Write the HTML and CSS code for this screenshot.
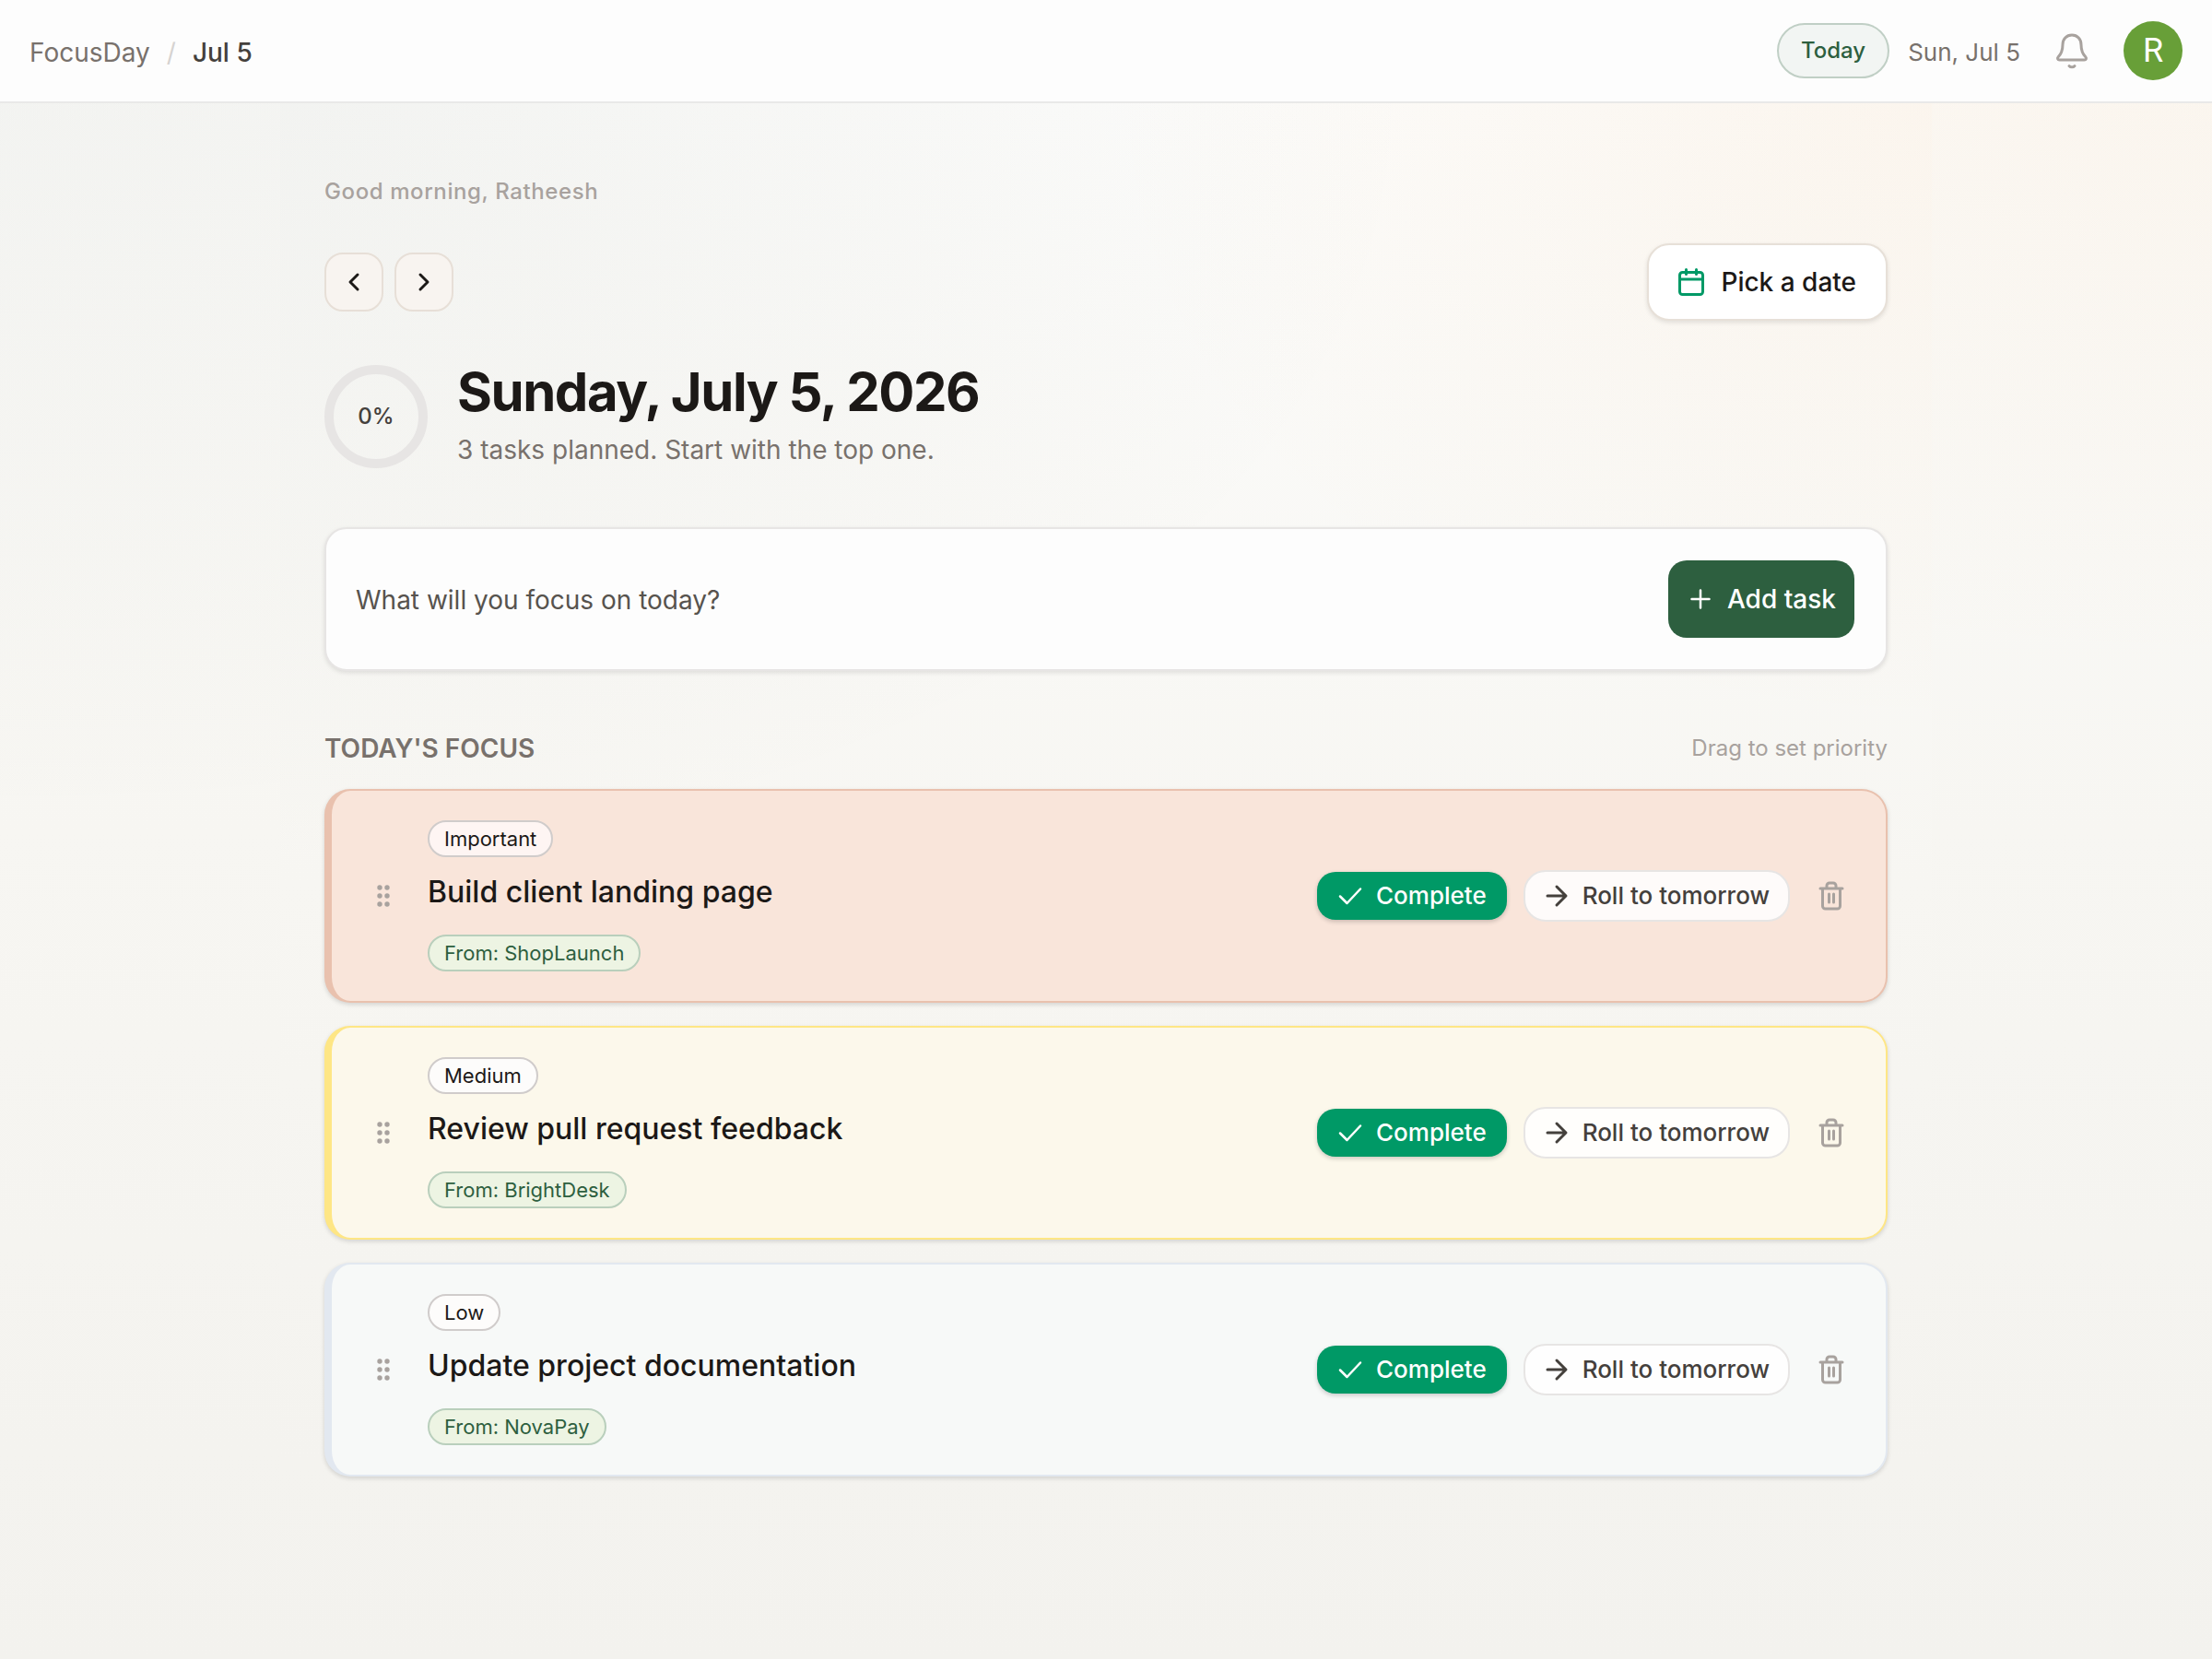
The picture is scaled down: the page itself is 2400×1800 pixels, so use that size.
FILE: index.html
```html
<!DOCTYPE html>
<html lang="en">
<head>
<meta charset="utf-8">
<meta name="viewport" content="width=device-width, initial-scale=1">
<title>FocusDay</title>
<link rel="stylesheet" href="styles.css">
</head>
<body>
<svg class="sprite" aria-hidden="true">
  <symbol id="grip" viewBox="0 0 24 24"><g fill="currentColor"><circle cx="8" cy="3" r="2.700"/><circle cx="16" cy="3" r="2.700"/><circle cx="8" cy="12" r="2.700"/><circle cx="16" cy="12" r="2.700"/><circle cx="8" cy="21" r="2.700"/><circle cx="16" cy="21" r="2.700"/></g></symbol>
  <symbol id="check" viewBox="0 0 28 28"><path d="M3 14.500l7.500 7.500L25 6.500" stroke-width="2.500"/></symbol>
  <symbol id="arrow" viewBox="0 0 28 28"><path d="M4 14h19M14 4l10 10-10 10"/></symbol>
  <symbol id="trash" viewBox="0 0 28 32"><path d="M2 8h24M4.500 8v19a3 3 0 0 0 3 3h13a3 3 0 0 0 3-3V8M9 8V5a3 3 0 0 1 3-3h4a3 3 0 0 1 3 3v3M11.500 14v9M16.500 14v9"/></symbol>
</svg>

<header class="topbar">
  <nav class="crumbs" aria-label="Breadcrumb">
    <a href="#">FocusDay</a><span class="slash">/</span><span class="current">Jul 5</span>
  </nav>
  <div class="tools">
    <button class="today" type="button">Today</button>
    <span class="short-date">Sun, Jul 5</span>
    <button class="bell" type="button" aria-label="Notifications">
      <svg viewBox="0 0 36 40"><path d="M18 3c-6 0-10 4.500-10 10.500 0 7.500-2 10.500-5 13.500-1 1-.5 3 1.500 3h27c2 0 2.500-2 1.500-3-3-3-5-6-5-13.500C28 7.500 24 3 18 3zM15 36.500a4 4 0 0 0 6 0"/></svg>
    </button>
    <button class="avatar" type="button" aria-label="Account">R</button>
  </div>
</header>

<main class="page">
  <p class="greeting">Good morning, Ratheesh</p>

  <div class="date-nav">
    <div class="steps">
      <button class="step" type="button" aria-label="Previous day"><svg viewBox="0 0 24 24"><path d="M16 4l-8 8 8 8"/></svg></button>
      <button class="step" type="button" aria-label="Next day"><svg viewBox="0 0 24 24"><path d="M8 4l8 8-8 8"/></svg></button>
    </div>
    <button class="pick" type="button">
      <svg viewBox="0 0 28 30"><rect x="1.500" y="4.500" width="25" height="24" rx="3"/><path d="M2 12h24M8.500 1.500v5M19.500 1.500v5"/></svg>
      Pick a date
    </button>
  </div>

  <section class="day">
    <div class="ring">0%</div>
    <div>
      <h1>Sunday, July 5, 2026</h1>
      <p class="summary">3 tasks planned. Start with the top one.</p>
    </div>
  </section>

  <form class="composer">
    <input type="text" aria-label="New task" placeholder="What will you focus on today?">
    <button class="add" type="button"><svg viewBox="0 0 22 22"><path d="M11 1.500v19M1.500 11h19" stroke-width="2.500"/></svg>Add task</button>
  </form>

  <div class="list-head">
    <h2>TODAY'S FOCUS</h2>
    <span>Drag to set priority</span>
  </div>

  <ul class="tasks">
    <li class="task important">
      <svg class="grip"><use href="#grip"/></svg>
      <div class="info">
        <span class="badge">Important</span>
        <h3>Build client landing page</h3>
        <span class="badge source">From: ShopLaunch</span>
      </div>
      <div class="actions">
        <button class="complete" type="button"><svg><use href="#check"/></svg>Complete</button>
        <button class="roll" type="button"><svg><use href="#arrow"/></svg>Roll to tomorrow</button>
        <button class="delete" type="button" aria-label="Delete task"><svg><use href="#trash"/></svg></button>
      </div>
    </li>
    <li class="task medium">
      <svg class="grip"><use href="#grip"/></svg>
      <div class="info">
        <span class="badge">Medium</span>
        <h3>Review pull request feedback</h3>
        <span class="badge source">From: BrightDesk</span>
      </div>
      <div class="actions">
        <button class="complete" type="button"><svg><use href="#check"/></svg>Complete</button>
        <button class="roll" type="button"><svg><use href="#arrow"/></svg>Roll to tomorrow</button>
        <button class="delete" type="button" aria-label="Delete task"><svg><use href="#trash"/></svg></button>
      </div>
    </li>
    <li class="task low">
      <svg class="grip"><use href="#grip"/></svg>
      <div class="info">
        <span class="badge">Low</span>
        <h3>Update project documentation</h3>
        <span class="badge source">From: NovaPay</span>
      </div>
      <div class="actions">
        <button class="complete" type="button"><svg><use href="#check"/></svg>Complete</button>
        <button class="roll" type="button"><svg><use href="#arrow"/></svg>Roll to tomorrow</button>
        <button class="delete" type="button" aria-label="Delete task"><svg><use href="#trash"/></svg></button>
      </div>
    </li>
  </ul>
</main>
</body>
</html>
```
FILE: styles.css
```css
:root {
  --wash:
    radial-gradient(ellipse 70% 50% at 0 0, rgba(60, 75, 50, 0.05), transparent),
    radial-gradient(ellipse 50% 40% at 100% 0, rgba(240, 155, 60, 0.07), transparent),
    linear-gradient(180deg, #fcfcfb 0, #f7f6f2 50%, #f3f2ee 100%);
}
* { box-sizing: border-box; }
body {
  margin: 0;
  min-height: 100vh;
  display: flex;
  flex-direction: column;
  font-family: Inter, "Liberation Sans", sans-serif;
  font-size: 28px;
  line-height: 40px;
  color: #1c1917;
  background: var(--wash);
}
h1, h2, h3, p, ul { margin: 0; padding: 0; }
button, input { font: inherit; color: inherit; }
button {
  display: flex;
  align-items: center;
  justify-content: center;
  padding: 0;
  border: 0;
  background: none;
  white-space: nowrap;
  cursor: pointer;
}
svg { fill: none; stroke: currentColor; stroke-width: 3; stroke-linecap: round; stroke-linejoin: round; flex: none; }
.sprite { display: none; }

.topbar {
  display: flex;
  align-items: center;
  justify-content: space-between;
  height: 112px;
  padding: 0 32px;
  background: #fdfdfd;
  border-bottom: 2px solid #e9e9e8;
}
.crumbs { display: flex; gap: 18px; padding-top: 4px; color: #44403c; }
.crumbs a { color: #78716c; text-decoration: none; }
.slash { color: #d6d3d1; }
.current { font-weight: 500; }
.tools { display: flex; align-items: center; color: #78716c; }
.today {
  height: 60px;
  padding: 0 24px;
  margin-right: 20px;
  border: 2px solid #c0cfc5;
  border-radius: 30px;
  background: #f2f5f3;
  color: #2d5f3f;
  font-size: 24px;
  font-weight: 500;
}
.short-date { padding-top: 4px; font-size: 26px; }
.bell { width: 80px; height: 64px; margin: 0 16px; color: #a8a29e; }
.bell svg { width: 36px; height: 40px; }
.avatar {
  width: 64px;
  height: 64px;
  border-radius: 50%;
  background: #689f38;
  color: #fff;
  font-family: Roboto, sans-serif;
  font-size: 36px;
}

.page {
  flex: 1;
  width: 100%;
  max-width: 1792px;
  margin: 0 auto;
  padding: 80px 48px 96px;
  background: var(--wash);
}
.greeting {
  line-height: 32px;
  font-size: 24px;
  font-weight: 500;
  letter-spacing: 0.025em;
  color: #a8a29e;
}
.date-nav { display: flex; align-items: center; justify-content: space-between; margin-top: 40px; }
.steps { display: flex; gap: 12px; }
.step { width: 64px; height: 64px; border: 2px solid #e7dfd7; border-radius: 20px; background: #f8f4f0; }
.step svg { width: 24px; height: 24px; }
.pick {
  gap: 18px;
  height: 84px;
  padding: 0 32px;
  border: 2px solid #e7e0d8;
  border-radius: 24px;
  background: #fff;
  box-shadow: 0 2px 5px rgba(0, 0, 0, 0.1);
  font-weight: 500;
}
.pick svg { width: 28px; height: 30px; color: #009966; }

.day { display: flex; align-items: center; gap: 32px; margin-top: 42px; padding-bottom: 6px; }
.ring {
  display: flex;
  align-items: center;
  justify-content: center;
  width: 112px;
  height: 112px;
  margin-top: 6px;
  border: 10px solid #e7e5e4;
  border-radius: 50%;
  font-size: 24px;
  font-weight: 500;
  color: #44403c;
}
h1 { font-size: 58px; line-height: 70px; font-weight: 700; letter-spacing: -0.025em; }
.summary { color: #78716c; line-height: 40px; margin-top: 8px; }

.composer {
  display: flex;
  align-items: center;
  margin-top: 58px;
  padding: 34px;
  padding-left: 32px;
  border: 2px solid #e7e5e4;
  border-radius: 24px;
  background: #fdfdfd;
  box-shadow: 0 2px 5px rgba(0, 0, 0, 0.1);
}
.composer input { flex: 1; min-width: 0; height: 60px; padding: 2px 0 0; border: 0; outline: 0; background: none; }
.composer input::placeholder { color: #57534e; opacity: 1; }
.add { gap: 18px; height: 84px; padding: 0 20px 0 24px; border-radius: 20px; background: #2d5f3f; color: #fff; font-weight: 500; }
.add svg { width: 22px; height: 22px; }

.list-head { display: flex; align-items: center; justify-content: space-between; margin-top: 64px; margin-bottom: 24px; }
h2 { font-size: 28px; line-height: 40px; font-weight: 600; color: #78716c; }
.list-head span { font-size: 24px; color: #a8a29e; }

.tasks { display: flex; flex-direction: column; gap: 25px; list-style: none; }
.task {
  display: flex;
  align-items: center;
  padding: 32px;
  border: 2px solid;
  border-left-width: 8px;
  border-radius: 28px;
  box-shadow: 0 2px 5px rgba(0, 0, 0, 0.14);
}
.important { background: #f9e5da; border-color: #e9c1ae; }
.medium { background: #fcf8eb; border-color: #fee685; }
.low { background: #f7f9f8; border-color: #e2e8f0; }
.grip { width: 24px; height: 24px; margin: 0 36px 0 12px; color: #a8a29e; stroke: none; }
.info { flex: 1; display: flex; flex-direction: column; align-items: flex-start; }
.badge {
  height: 40px;
  padding: 0 16px;
  border: 2px solid #d0cccb;
  border-radius: 20px;
  background: #fdfcfb;
  font-size: 22px;
  line-height: 36px;
}
.important .badge { background: #fef5f3; }
.task .source { border-color: #b9cfbc; background: #edf4e3; color: #2d5f3f; }
h3 { margin: 16px 0 24px; font-size: 32px; line-height: 44px; font-weight: 500; }
.actions { display: flex; align-items: center; gap: 18px; font-size: 26px; font-weight: 500; }
.actions svg { width: 28px; height: 28px; }
.complete { gap: 14px; height: 52px; padding: 0 22px; border-radius: 20px; background: #009966; color: #fff; box-shadow: 0 2px 5px rgba(0, 0, 0, 0.2); }
.roll { gap: 14px; height: 56px; padding: 0 20px; border: 2px solid #e7e5e4; border-radius: 24px; background: rgba(255, 255, 255, 0.85); color: #44403c; }
.delete { width: 54px; height: 56px; color: #a8a29e; }
.delete svg { width: 28px; height: 32px; }
```
